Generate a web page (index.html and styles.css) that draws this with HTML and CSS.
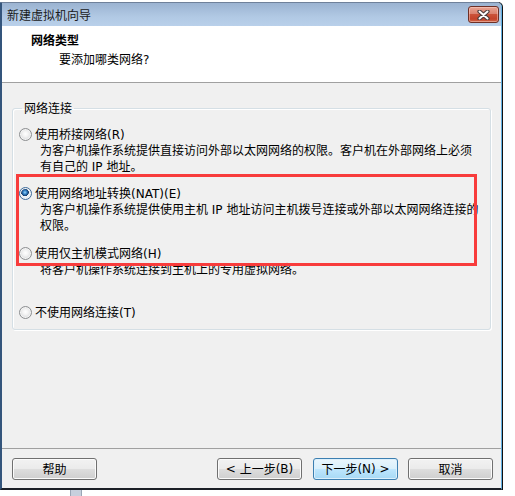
FILE: index.html
```html
<!DOCTYPE html>
<html lang="zh-CN">
<head>
<meta charset="utf-8">
<title>新建虚拟机向导</title>
<link rel="stylesheet" href="styles.css">
</head>
<body>
<div class="window">
  <div class="titlebar">
    <span class="title">新建虚拟机向导</span>
    <span class="close">
      <svg width="13" height="10" viewBox="0 0 13 10">
        <path d="M2.5 1.5 L10.5 8.5 M10.5 1.5 L2.5 8.5" stroke="#4b3b3b" stroke-width="4.2" stroke-linecap="round" fill="none"/>
        <path d="M2.5 1.5 L10.5 8.5 M10.5 1.5 L2.5 8.5" stroke="#ffffff" stroke-width="2" stroke-linecap="round" fill="none"/>
      </svg>
    </span>
  </div>
  <div class="header">
    <div class="h-title">网络类型</div>
    <div class="h-sub">要添加哪类网络<span class="lat">?</span></div>
  </div>
  <div class="content">
    <fieldset class="group">
      <legend>网络连接</legend>
      <div class="option">
        <div class="opt-row"><span class="radio"></span><span class="opt-label">使用桥接网络<span class="lat">(R)</span></span></div>
        <div class="opt-desc">为客户机操作系统提供直接访问外部以太网网络的权限。客户机在外部网络上必须<br>有自己的<span class="lat">&nbsp;IP&nbsp;</span>地址。</div>
      </div>
      <div class="option opt-nat">
        <div class="opt-row"><span class="radio checked"></span><span class="opt-label">使用网络地址转换<span class="lat">(NAT)(E)</span></span></div>
        <div class="opt-desc">为客户机操作系统提供使用主机<span class="lat">&nbsp;IP&nbsp;</span>地址访问主机拨号连接或外部以太网网络连接的<br>权限。</div>
      </div>
      <div class="option opt-host">
        <div class="opt-row"><span class="radio"></span><span class="opt-label">使用仅主机模式网络<span class="lat">(H)</span></span></div>
        <div class="opt-desc">将客户机操作系统连接到主机上的专用虚拟网络。</div>
      </div>
      <div class="option opt-none">
        <div class="opt-row"><span class="radio"></span><span class="opt-label">不使用网络连接<span class="lat">(T)</span></span></div>
      </div>
    </fieldset>
  </div>
  <div class="footer">
    <span class="btn btn-help">帮助</span>
    <span class="btn btn-back"><span class="lat">&lt;&nbsp;</span>上一步<span class="lat">(B)</span></span>
    <span class="btn btn-next">下一步<span class="lat">(N)&nbsp;&gt;</span></span>
    <span class="btn btn-cancel">取消</span>
  </div>
</div>
<div class="behind"></div>
<div class="highlight"></div>
</body>
</html>
```
FILE: styles.css
```css
html, body {
  margin: 0;
  padding: 0;
}
body {
  width: 515px;
  height: 496px;
  background: #ffffff;
  position: relative;
  overflow: hidden;
  font-family: "Noto Sans CJK SC", "Noto Sans", sans-serif;
  font-size: 12px;
  line-height: 16px;
  color: #000;
}
.lat {
  font-family: "DejaVu Sans", "Noto Sans CJK SC", sans-serif;
  line-height: 1;
}
.window {
  margin-top: 2px;
  width: 499px;
  height: 485px;
  border-left: 2px solid #34557c;
  border-right: 1px solid #62b0e2;
  border-top: 1px solid #6f819a;
  border-bottom: 2px solid #1b1f26;
  border-top-right-radius: 5px;
  box-shadow: 1px 0 0 #111;
  display: flex;
  flex-direction: column;
  background: #f0f0f0;
}
.titlebar {
  height: 23px;
  flex: none;
  display: flex;
  align-items: center;
  justify-content: space-between;
  padding: 0 2px 0 5px;
  background: linear-gradient(#9bb3d1, #b1c9e4 60%, #b9d0ea);
  border-top-right-radius: 4px;
}
.title {
  color: #1a1a1a;
  font-size: 12px;
}
.close {
  align-self: flex-start;
  margin-top: 3px;
  width: 29px;
  height: 15px;
  border: 1px solid #6e3026;
  border-radius: 3px;
  background: linear-gradient(#e9a391, #db8370 45%, #ca5239 50%, #c4432a 80%, #d06a4d);
  box-shadow: inset 0 0 0 1px rgba(255, 220, 210, 0.45);
  display: flex;
  align-items: center;
  justify-content: center;
}
.header {
  flex: none;
  background: #ffffff;
  border-bottom: 1px solid #a0a0a0;
  box-sizing: border-box;
  height: 57px;
  padding: 6px 0 0 29px;
}
.h-title {
  font-weight: 700;
}
.h-sub {
  margin-top: 3px;
  margin-left: 28px;
}
.content {
  flex: 1;
  padding: 17px 10px 0 10px;
}
.group {
  margin: 0;
  border: 1px solid #d5dfe5;
  border-radius: 3px;
  padding: 10px 0 9px 6px;
  box-shadow: inset 1px 1px 0 #fff, 1px 1px 0 #fff;
}
.group legend {
  margin-left: 3px;
  padding: 0 2px;
  line-height: 16px;
}
.opt-row {
  display: flex;
  align-items: center;
  height: 16px;
}
.radio {
  flex: none;
  width: 11px;
  height: 11px;
  border-radius: 50%;
  border: 1px solid #8c8e90;
  background: radial-gradient(circle at 50% 45%, #ffffff 0, #f2f2f2 35%, #d6d8da 75%, #c4c6c8 100%);
  box-shadow: inset 0 0 0 1px #f4f4f4;
}
.radio.checked {
  border-color: #3d6a9a;
  background:
    radial-gradient(circle at 45% 40%, #9fd6f8 0, #3c8dd0 1.6px, #1c4f8a 3px, #163c66 3.6px, rgba(0,0,0,0) 4px),
    radial-gradient(circle at 50% 45%, #ffffff 0, #eef3f8 45%, #c9d6e3 100%);
}
.opt-label {
  margin-left: 3px;
  white-space: nowrap;
}
.opt-desc {
  margin-left: 21px;
  white-space: nowrap;
}
.opt-nat {
  margin-top: 11px;
}
.opt-host {
  margin-top: 12px;
}
.opt-none {
  margin-top: 27px;
}
.footer {
  flex: none;
  border-top: 1px solid #a0a0a0;
  padding: 9px 8px 8px 10px;
  display: flex;
  align-items: center;
}
.btn {
  box-sizing: border-box;
  width: 85px;
  height: 22px;
  border: 1px solid #707070;
  border-radius: 3px;
  background: linear-gradient(#f2f2f2, #ebebeb 48%, #dddddd 52%, #cfcfcf);
  box-shadow: inset 0 0 0 1px #fbfbfb;
  display: flex;
  align-items: center;
  justify-content: center;
  white-space: nowrap;
}
.btn-help {
  margin-right: auto;
}
.btn-next {
  margin-left: 11px;
  border-color: #3c7fb1;
  background: linear-gradient(#eaf6fd, #d9f0fc 48%, #bee6fd 52%, #a7d9f5);
  box-shadow: inset 0 0 0 1px #dcf0fc;
}
.btn-cancel {
  margin-left: 10px;
}
.behind {
  margin-left: 70px;
  width: 12px;
  height: 6px;
  background: #c7d0dd;
  border-left: 1px solid #9aa6b6;
  border-right: 1px solid #9aa6b6;
  box-sizing: border-box;
}
.highlight {
  position: absolute;
  left: 16px;
  top: 174px;
  width: 455px;
  height: 86px;
  border: 3px solid #f83c3c;
}
```
